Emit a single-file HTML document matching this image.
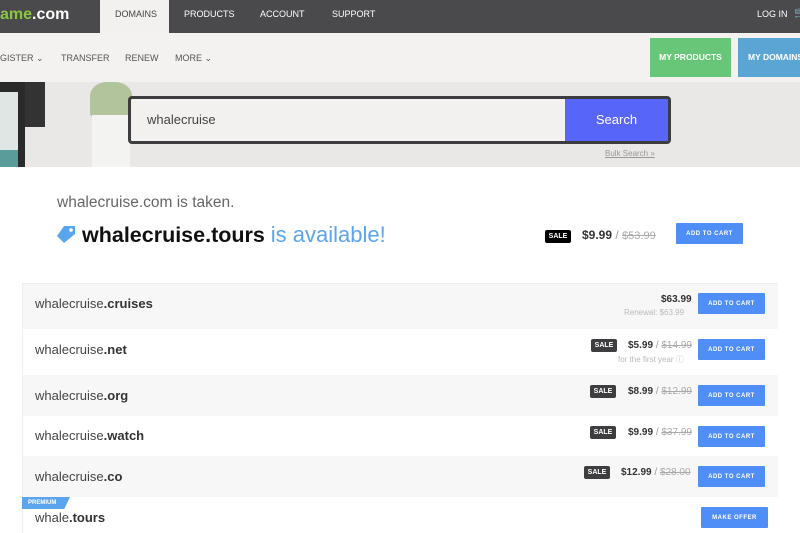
<!DOCTYPE html>
<html><head><meta charset="utf-8"><style>
*{margin:0;padding:0;box-sizing:border-box}
body{width:800px;height:533px;overflow:hidden;background:#fff;font-family:"Liberation Sans",sans-serif;position:relative;color:#333}
.a{position:absolute}
.top{left:0;top:0;width:800px;height:33px;background:#4a4a4c}
.nav{color:#fff;font-size:9px;top:9px}
.sub{left:0;top:33px;width:800px;height:49px;background:#f3f2f0}
.sn{font-size:9px;color:#555;top:53px}
.hero{left:0;top:82px;width:800px;height:85px;background:#e9e8e6}
.btn{background:#4f8ef7;color:#fff;font-size:6px;font-weight:bold;letter-spacing:.5px;width:67px;height:21px;border-radius:1px;display:flex;align-items:center;justify-content:center}
.row{left:22px;width:756px;border-left:1px solid #eee}
.dn{font-size:13px;color:#444;left:35px}
.dn b{color:#333}
.sale{background:#3e3e40;color:#fff;font-size:7px;font-weight:bold;width:26px;height:13px;line-height:13px;text-align:center;border-radius:2px}
.pr{font-size:10px;font-weight:bold;color:#333}
.pr s{color:#aaa;font-weight:normal}
.pr i{font-style:normal;color:#999;font-weight:normal}
</style></head><body>
<div class="a top"></div>
<div class="a" style="left:0;top:6px;font-size:16px;font-weight:bold;color:#8cc63f">ame<span style="color:#fff">.com</span></div>
<div class="a" style="left:100px;top:0;width:69px;height:33px;background:#f2f1ef"></div>
<div class="a nav" style="left:115px;color:#444">DOMAINS</div>
<div class="a nav" style="left:184px">PRODUCTS</div>
<div class="a nav" style="left:260px">ACCOUNT</div>
<div class="a nav" style="left:332px">SUPPORT</div>
<div class="a nav" style="left:757px">LOG IN</div>
<div class="a nav" style="left:794px;font-size:11px;top:6px">🛒</div>
<div class="a sub"></div>
<div class="a sn" style="left:0">GISTER ⌄</div>
<div class="a sn" style="left:61px">TRANSFER</div>
<div class="a sn" style="left:125px">RENEW</div>
<div class="a sn" style="left:175px">MORE ⌄</div>
<div class="a" style="left:650px;top:38px;width:81px;height:39px;background:#67c677;color:#fff;font-size:8.5px;font-weight:bold;line-height:39px;text-align:center">MY PRODUCTS</div>
<div class="a" style="left:738px;top:38px;width:70px;height:39px;background:#5ba5d4;color:#fff;font-size:8.5px;font-weight:bold;line-height:39px;padding-left:10px">MY DOMAINS</div>
<div class="a hero"></div>
<div class="a" style="left:0;top:82px;width:25px;height:85px;background:#2a2a2a"></div>
<div class="a" style="left:0;top:92px;width:18px;height:75px;background:#dfe6e4"></div>
<div class="a" style="left:0;top:150px;width:18px;height:17px;background:#5a9c9a"></div>
<div class="a" style="left:25px;top:82px;width:20px;height:45px;background:#333"></div>
<div class="a" style="left:90px;top:82px;width:42px;height:35px;background:#9ab57a;border-radius:40% 40% 10% 10%;opacity:.7"></div>
<div class="a" style="left:92px;top:115px;width:38px;height:52px;background:#f3f3f1"></div>
<div class="a" style="left:128px;top:96px;width:543px;height:48px;border:3px solid #3d3d3f;border-radius:4px;background:#f2f1ef"></div>
<div class="a" style="left:147px;top:112px;font-size:13px;color:#444">whalecruise</div>
<div class="a" style="left:565px;top:99px;width:103px;height:42px;background:#5865f9;color:#fff;font-size:13px;line-height:42px;text-align:center">Search</div>
<div class="a" style="left:605px;top:149px;font-size:8px;color:#999;text-decoration:underline">Bulk Search »</div>
<div class="a" style="left:57px;top:194px;font-size:15.5px;color:#666">whalecruise.com is taken.</div>
<svg class="a" style="left:56px;top:224px" width="22" height="20" viewBox="0 0 22 20"><path d="M8 2h11v8L8 19 1 12z" fill="#5ba5ee"/><circle cx="15" cy="6" r="1.8" fill="#fff"/></svg>
<div class="a" style="left:82px;top:222px;font-size:21.5px;font-weight:bold;color:#111">whalecruise.tours <span style="font-weight:normal;color:#5ba5ee;font-size:22px">is available!</span></div>
<div class="a sale" style="left:545px;top:230px;background:#000">SALE</div>
<div class="a pr" style="left:582px;top:228px;font-size:12px">$9.99 <i>/</i> <s style="font-size:11px">$53.99</s></div>
<div class="a btn" style="left:676px;top:223px">ADD TO CART</div>

<div class="a row" style="top:283px;height:46px;background:#f7f7f7;border-top:1px solid #eee"></div>
<div class="a row" style="top:329px;height:46px;background:#fff"></div>
<div class="a row" style="top:375px;height:41px;background:#f7f7f7"></div>
<div class="a row" style="top:416px;height:40px;background:#fff"></div>
<div class="a row" style="top:456px;height:41px;background:#f7f7f7"></div>
<div class="a row" style="top:497px;height:36px;background:#fff"></div>

<div class="a dn" style="top:296px">whalecruise<b>.cruises</b></div>
<div class="a pr" style="left:661px;top:294px">$63.99</div>
<div class="a" style="left:624px;top:308px;font-size:8px;color:#bbb">Renewal: $63.99</div>
<div class="a btn" style="left:698px;top:293px">ADD TO CART</div>

<div class="a dn" style="top:342px">whalecruise<b>.net</b></div>
<div class="a sale" style="left:591px;top:339px">SALE</div>
<div class="a pr" style="left:628px;top:340px">$5.99 <i>/</i> <s>$14.99</s></div>
<div class="a" style="left:618px;top:354px;font-size:8px;color:#bbb">for the first year ⓘ</div>
<div class="a btn" style="left:698px;top:339px">ADD TO CART</div>

<div class="a dn" style="top:388px">whalecruise<b>.org</b></div>
<div class="a sale" style="left:590px;top:385px">SALE</div>
<div class="a pr" style="left:628px;top:386px">$8.99 <i>/</i> <s>$12.99</s></div>
<div class="a btn" style="left:698px;top:385px">ADD TO CART</div>

<div class="a dn" style="top:428px">whalecruise<b>.watch</b></div>
<div class="a sale" style="left:590px;top:426px">SALE</div>
<div class="a pr" style="left:628px;top:427px">$9.99 <i>/</i> <s>$37.99</s></div>
<div class="a btn" style="left:698px;top:426px">ADD TO CART</div>

<div class="a dn" style="top:469px">whalecruise<b>.co</b></div>
<div class="a sale" style="left:584px;top:466px">SALE</div>
<div class="a pr" style="left:621px;top:467px">$12.99 <i>/</i> <s>$28.00</s></div>
<div class="a btn" style="left:698px;top:466px">ADD TO CART</div>

<div class="a" style="left:22px;top:497px;width:48px;height:12px;background:#5ba5ee;color:#fff;font-size:6px;font-weight:bold;line-height:12px;padding-left:6px;clip-path:polygon(0 0,100% 0,88% 100%,0 100%)">PREMIUM</div>
<div class="a dn" style="top:510px">whale<b>.tours</b></div>
<div class="a btn" style="left:701px;top:507px">MAKE OFFER</div>
</body></html>
